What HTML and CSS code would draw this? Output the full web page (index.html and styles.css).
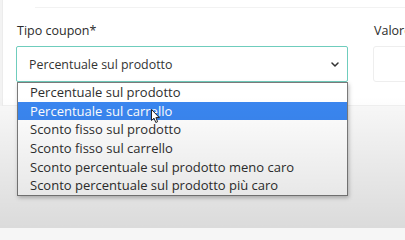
FILE: index.html
```html
<!DOCTYPE html>
<html lang="it">
<head>
<meta charset="utf-8">
<title>Tipo coupon</title>
<link rel="stylesheet" href="styles.css">
</head>
<body>
<div class="page">
  <div class="edge"></div>
  <div class="card">
    <div class="topline"></div>
    <div class="row">
      <div class="field field-main">
        <label class="label">Tipo coupon*</label>
        <div class="select">
          <span class="select-value">Percentuale sul prodotto</span>
          <svg class="chevron" width="8" height="5" viewBox="0 0 8 5"><path d="M1 1 L4 4 L7 1" fill="none" stroke="#333" stroke-width="1.5" stroke-linecap="round" stroke-linejoin="round"/></svg>
        </div>
      </div>
      <div class="field field-side">
        <label class="label">Valore</label>
        <div class="input"></div>
      </div>
    </div>
  </div>
  <ul class="options">
    <li class="option">Percentuale sul prodotto</li>
    <li class="option selected">Percentuale sul carrello</li>
    <li class="option">Sconto fisso sul prodotto</li>
    <li class="option">Sconto fisso sul carrello</li>
    <li class="option">Sconto percentuale sul prodotto meno caro</li>
    <li class="option">Sconto percentuale sul prodotto più caro</li>
  </ul>
  <div class="shade"></div>
  <svg class="cursor" width="10" height="15" viewBox="0 0 10 15"><path d="M0.5 0.5 L0.5 11.5 L3 9.2 L4.8 13.5 L6.6 12.7 L4.9 8.6 L8.3 8.6 Z" fill="#fff" stroke="#222" stroke-width="1" stroke-linejoin="round"/></svg>
</div>
</body>
</html>
```

FILE: styles.css
```css
* { box-sizing: border-box; }
html, body { margin: 0; padding: 0; }
body {
  font-family: "Open Sans", "Noto Sans", sans-serif;
  color: #333;
  background: #f6f6f6;
  overflow: hidden;
}
.page {
  position: relative;
  width: 405px;
  height: 228px;
  overflow: hidden;
  background: #f9f9f9;
}
.edge {
  position: absolute;
  left: 0;
  top: 0;
  width: 3px;
  height: 106px;
  background: #f3f3f3;
  border-right: 1px solid #ececec;
}
.card {
  margin-left: 3px;
  height: 106px;
  background: #fff;
  border-bottom: 1px solid #f0f0f0;
}
.topline {
  margin-left: 32px;
  height: 8px;
  border-bottom: 1px solid #f2f2f2;
}
.row {
  display: flex;
  gap: 25px;
  padding: 14px 0 0 13px;
}
.field {
  display: flex;
  flex-direction: column;
  gap: 7px;
}
.field-main { width: 332px; flex-shrink: 0; }
.field-side { width: 120px; flex-shrink: 0; }
.label {
  font-size: 12.5px;
  line-height: 17px;
  font-weight: 500;
  color: #2b2b2b;
  padding-left: 1px;
}
.select {
  height: 36px;
  border: 1px solid #6fcdbd;
  border-radius: 2px;
  display: flex;
  align-items: center;
  justify-content: space-between;
  padding: 0 8px 0 12px;
}
.select-value {
  font-size: 12.4px;
  color: #333;
}
.chevron { display: block; }
.input {
  height: 36px;
  border: 1px solid #eeeeee;
  border-radius: 3px;
}
.options {
  position: absolute;
  left: 17px;
  top: 82px;
  width: 331px;
  margin: 0;
  padding: 0;
  list-style: none;
  background: #fff;
  border: 1px solid #7a7a7a;
  box-shadow: 1px 2px 4px rgba(0,0,0,0.25);
}
.option {
  height: 18.7px;
  line-height: 18.7px;
  padding-left: 12px;
  font-size: 13px;
  color: #2e2e2e;
  white-space: nowrap;
}
.option.selected {
  background: #3a86f0;
  color: #fff;
}
.shade {
  position: absolute;
  left: 0;
  right: 0;
  top: 96px;
  bottom: 0;
  background: linear-gradient(rgba(0,0,0,0), rgba(0,0,0,0.03) 25%, rgba(0,0,0,0.12));
  pointer-events: none;
}
.cursor {
  position: absolute;
  left: 151px;
  top: 109px;
}
```
